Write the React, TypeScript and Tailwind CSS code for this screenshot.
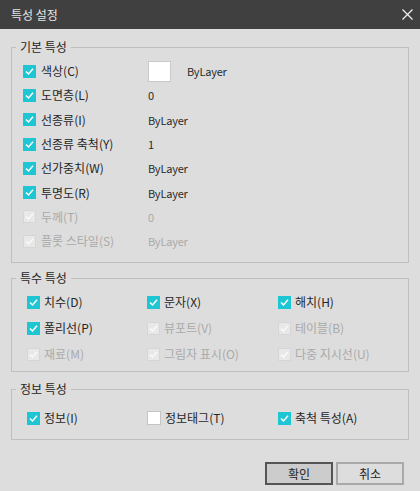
import React from 'react';

type BoxState = 'on' | 'off' | 'dis';

const Box: React.FC<{ state: BoxState }> = ({ state }) => {
  if (state === 'off') {
    return <span className="block w-[14px] h-[14px] shrink-0 bg-white border border-[#c4c4c4]" />;
  }
  const on = state === 'on';
  return (
    <span
      className={
        on
          ? 'flex w-[13px] h-[13px] shrink-0 items-center justify-center bg-[#1ec5d2]'
          : 'flex w-[13px] h-[13px] shrink-0 items-center justify-center bg-[#e8e8e8] border border-[#d6d6d6]'
      }
    >
      <svg width="13" height="13" viewBox="0 0 13 13" className="shrink-0">
        <polyline
          points="3,6.5 5.5,9 10,3.8"
          fill="none"
          stroke={on ? '#ffffff' : '#fafafa'}
          strokeWidth="1.5"
        />
      </svg>
    </span>
  );
};

type Row = { label: string; key: string; value: string; state: BoxState; swatch?: boolean };

const basicRows: Row[] = [
  { label: '색상', key: '(C)', value: 'ByLayer', state: 'on', swatch: true },
  { label: '도면층', key: '(L)', value: '0', state: 'on' },
  { label: '선종류', key: '(I)', value: 'ByLayer', state: 'on' },
  { label: '선종류 축척', key: '(Y)', value: '1', state: 'on' },
  { label: '선가중치', key: '(W)', value: 'ByLayer', state: 'on' },
  { label: '투명도', key: '(R)', value: 'ByLayer', state: 'on' },
  { label: '두께', key: '(T)', value: '0', state: 'dis' },
  { label: '플롯 스타일', key: '(S)', value: 'ByLayer', state: 'dis' },
];

type Item = { label: string; state: BoxState };

const specialItems: Item[] = [
  { label: '치수(D)', state: 'on' },
  { label: '문자(X)', state: 'on' },
  { label: '해치(H)', state: 'on' },
  { label: '폴리선(P)', state: 'on' },
  { label: '뷰포트(V)', state: 'dis' },
  { label: '테이블(B)', state: 'dis' },
  { label: '재료(M)', state: 'dis' },
  { label: '그림자 표시(O)', state: 'dis' },
  { label: '다중 지시선(U)', state: 'dis' },
];

const infoItems: Item[] = [
  { label: '정보(I)', state: 'on' },
  { label: '정보태그(T)', state: 'off' },
  { label: '축척 특성(A)', state: 'on' },
];

const Legend: React.FC<{ text: string }> = ({ text }) => (
  <legend className="ml-[4px] px-[4px] leading-[18px] text-[#262626]">{text}</legend>
);

const ItemGrid: React.FC<{ items: Item[]; rowH: string }> = ({ items, rowH }) => (
  <div className="grid grid-cols-[120px_131px_1fr] pl-[15px]">
    {items.map((it) => (
      <div key={it.label} className={`flex items-center gap-[4px] ${rowH}`}>
        <Box state={it.state} />
        <span className={it.state === 'dis' ? 'text-[#aaaaaa]' : 'text-[#262626]'}>{it.label}</span>
      </div>
    ))}
  </div>
);

export default function App() {
  return (
    <div className="w-[420px] h-[491px] bg-[#dddddd] flex flex-col text-[12px] leading-[16px] font-['Noto_Sans_CJK_KR',sans-serif]">
      <div className="h-[29px] shrink-0 bg-[#404040] flex items-center justify-between pl-[11px] pr-[7px] text-[#e6e6e6]">
        <span className="text-[12px]">특성 설정</span>
        <svg width="11" height="11" viewBox="0 0 11 11">
          <path d="M0.5 0.5 L10.5 10.5 M10.5 0.5 L0.5 10.5" stroke="#f2f2f2" strokeWidth="1.2" fill="none" />
        </svg>
      </div>

      <fieldset className="mx-[11px] mt-[9px] border border-[#bfbfbf]">
        <Legend text="기본 특성" />
        <div className="pl-[11px] pt-[3px] pb-[9px]">
          {basicRows.map((r) => {
            const dis = r.state === 'dis';
            return (
              <div key={r.label} className="flex items-center h-[24.3px]">
                <div className="w-[125px] flex items-center gap-[5px]">
                  <Box state={r.state} />
                  <span className={dis ? 'text-[#aaaaaa]' : 'text-[#262626]'}>
                    {r.label}
                    {r.key}
                  </span>
                </div>
                {r.swatch ? (
                  <div className="flex items-center">
                    <span className="block w-[23px] h-[21px] bg-white border border-[#c9c9c9]" />
                    <span className="ml-[16px] text-[11px] tracking-[-0.2px] text-[#2a2a2a]">{r.value}</span>
                  </div>
                ) : (
                  <span className={`text-[11px] tracking-[-0.2px] ${dis ? 'text-[#aaaaaa]' : 'text-[#2a2a2a]'}`}>
                    {r.value}
                  </span>
                )}
              </div>
            );
          })}
        </div>
      </fieldset>

      <fieldset className="mx-[11px] mt-[6px] border border-[#bfbfbf]">
        <Legend text="특수 특성" />
        <div className="pt-[2px] pb-[4px]">
          <ItemGrid items={specialItems} rowH="h-[26px]" />
        </div>
      </fieldset>

      <fieldset className="mx-[11px] mt-[8px] border border-[#bfbfbf]">
        <Legend text="정보 특성" />
        <div className="pt-[7px] pb-[8px]">
          <ItemGrid items={infoItems} rowH="h-[26px]" />
        </div>
      </fieldset>

      <div className="mt-[22px] flex justify-end gap-[3px] pr-[16px]">
        <button className="w-[68px] h-[23px] bg-[#cccccc] border-2 border-[#555555] text-[#262626] flex items-center justify-center">
          확인
        </button>
        <button className="w-[68px] h-[23px] bg-[#dddddd] border-2 border-[#a9a9a9] text-[#262626] flex items-center justify-center">
          취소
        </button>
      </div>
    </div>
  );
}
